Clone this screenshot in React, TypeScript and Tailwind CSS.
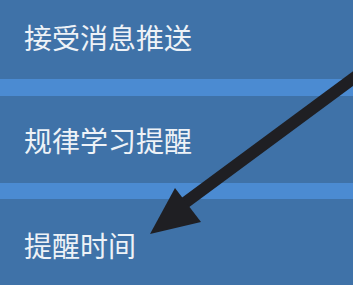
import React from "react";

const Row = ({ label, h }: { label: string; h: string }) => (
  <div className={`flex items-start pl-6 bg-[#3f72a8] ${h}`}>
    <span className="text-[28px] leading-none text-[#eef2f7]">{label}</span>
  </div>
);

export default function App() {
  return (
    <div
      className="relative w-[353px] h-[285px] overflow-hidden bg-[#3f72a8]"
      style={{ fontFamily: '"Noto Sans CJK SC", "Noto Sans", sans-serif' }}
    >
      <div className="flex flex-col">
        <Row label="接受消息推送" h="h-[79px] pt-[23px]" />
        <div className="h-[17px] bg-[#4b8bd2]" />
        <Row label="规律学习提醒" h="h-[87px] pt-[30px]" />
        <div className="h-[16px] bg-[#4b8bd2]" />
        <Row label="提醒时间" h="h-[86px] pt-[32px]" />
      </div>

      {/* annotation arrow */}
      <svg className="absolute inset-0" width="353" height="285" viewBox="0 0 353 285">
        <line x1="362" y1="72" x2="182" y2="205" stroke="#1f1f23" strokeWidth="12" />
        <polygon points="150,234 175,188 201,222" fill="#1f1f23" />
      </svg>
    </div>
  );
}
